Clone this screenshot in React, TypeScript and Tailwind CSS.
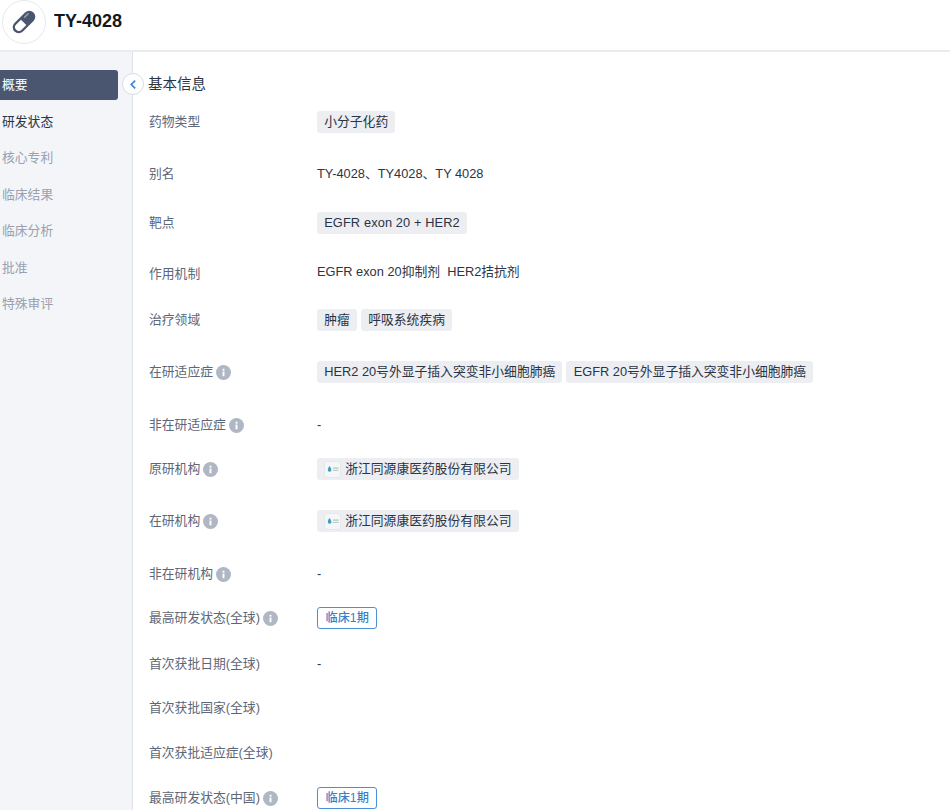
const FONT = "font-['Liberation_Sans','Noto_Sans_CJK_SC',sans-serif]";

const navItems = [
  { label: '研发状态', tone: 'text-[#2b3445]' },
  { label: '核心专利', tone: 'text-[#99a1b0]' },
  { label: '临床结果', tone: 'text-[#99a1b0]' },
  { label: '临床分析', tone: 'text-[#99a1b0]' },
  { label: '批准', tone: 'text-[#99a1b0]' },
  { label: '特殊审评', tone: 'text-[#99a1b0]' },
];

const Tag = ({ children }: { children: React.ReactNode }) => (
  <span className="inline-flex h-[22px] items-center gap-[4px] rounded-[3px] bg-[#eceef2] px-[7.2px] text-[12.8px] text-[#2b3445]">
    {children}
  </span>
);

const Info = () => (
  <svg viewBox="0 0 16 16" className="ml-[3px] h-[15px] w-[15px] shrink-0">
    <circle cx="8" cy="8" r="8" fill="#b0b7c4" />
    <rect x="7" y="7" width="2" height="5" fill="#fff" />
    <rect x="7" y="4" width="2" height="2" fill="#fff" />
  </svg>
);

const OrgLogo = () => (
  <span className="flex h-[17px] w-[17px] items-center justify-center gap-[1px] rounded-[3px] border border-[#e6e8ec] bg-[#f5f6f8]">
    <svg viewBox="0 0 12 8" className="h-[8px] w-[12px]">
      <path d="M2.5 1 C1.2 3 .8 4 .8 5 a1.8 1.8 0 0 0 3.6 0 C4.4 4 3.8 3 2.5 1z" fill="#3a9ac4" />
      <path d="M1.6 5.2a1 1 0 0 0 2 0z" fill="#4fae8a" />
      <rect x="6" y="2.5" width="5.5" height="1.2" fill="#a9c7bb" />
      <rect x="6" y="4.8" width="5.5" height="1.2" fill="#b9cfc6" />
    </svg>
  </span>
);

const Org = () => (
  <Tag>
    <OrgLogo />
    浙江同源康医药股份有限公司
  </Tag>
);

const Stage = () => (
  <span className="inline-flex h-[22px] items-center rounded-[3px] border border-[#4a90d9] bg-white px-[7.5px] text-[12.2px] font-medium text-[#3b7fc9]">
    临床1期
  </span>
);

const Plain = ({ children }: { children: React.ReactNode }) => (
  <span className="text-[12.8px] text-[#2b3445]">{children}</span>
);

const rows: { label: string; info?: boolean; gap: string; value?: React.ReactNode }[] = [
  { label: '药物类型', gap: 'mb-[28px]', value: <Tag>小分子化药</Tag> },
  { label: '别名', gap: 'mb-[25px]', value: <Plain>TY-4028、TY4028、TY 4028</Plain> },
  { label: '靶点', gap: 'mb-[27px]', value: <Tag><span className="tracking-[0.12px]">EGFR exon 20 + HER2</span></Tag> },
  { label: '作用机制', gap: 'mb-[22px]', value: <span className="-translate-y-[2px] text-[12.8px] text-[#2b3445]">EGFR exon 20抑制剂&nbsp;&nbsp;HER2拮抗剂</span> },
  {
    label: '治疗领域',
    gap: 'mb-[28px]',
    value: (
      <div className="flex gap-[4px]">
        <Tag>肿瘤</Tag>
        <Tag>呼吸系统疾病</Tag>
      </div>
    ),
  },
  {
    label: '在研适应症',
    info: true,
    gap: 'mb-[29px]',
    value: (
      <div className="flex gap-[4px]">
        <Tag>HER2 20号外显子插入突变非小细胞肺癌</Tag>
        <Tag>EGFR 20号外显子插入突变非小细胞肺癌</Tag>
      </div>
    ),
  },
  { label: '非在研适应症', info: true, gap: 'mb-[20px]', value: <Plain>-</Plain> },
  { label: '原研机构', info: true, gap: 'mb-[28px]', value: <Org /> },
  { label: '在研机构', info: true, gap: 'mb-[29px]', value: <Org /> },
  { label: '非在研机构', info: true, gap: 'mb-[20px]', value: <Plain>-</Plain> },
  { label: '最高研发状态(全球)', info: true, gap: 'mb-[22px]', value: <Stage /> },
  { label: '首次获批日期(全球)', gap: 'mb-[20px]', value: <Plain>-</Plain> },
  { label: '首次获批国家(全球)', gap: 'mb-[21px]' },
  { label: '首次获批适应症(全球)', gap: 'mb-[21px]' },
  { label: '最高研发状态(中国)', info: true, gap: 'mb-0', value: <Stage /> },
];

export default function App() {
  return (
    <div className={`${FONT} flex h-[810px] w-[950px] flex-col overflow-hidden bg-white`}>
      <header className="flex h-[52px] shrink-0 items-start border-b-2 border-[#e9ebef] pl-[2px]">
        <div className="flex h-[44px] w-[44px] items-center justify-center rounded-full border border-[#e6e8ec] bg-white">
          <svg viewBox="0 0 30 30" className="h-[30px] w-[30px]">
            <g transform="rotate(-45 15 15)">
              <rect x="1.5" y="9" width="27" height="12" rx="6" fill="#4a5670" />
              <path d="M14.5 11.2H7.8a3.8 3.8 0 0 0 0 7.6H14.5z" fill="#fff" />
              <rect x="18" y="11.4" width="6.5" height="1.4" rx=".7" fill="#9aa3b5" />
            </g>
          </svg>
        </div>
        <h1 className="ml-[8px] mt-[9px] text-[18px] leading-[24px] font-bold text-[#14191f]">TY-4028</h1>
      </header>

      <div className="flex min-h-0 flex-1">
        <aside className="relative w-[133px] shrink-0 border-r border-[#dfe2e7] bg-[#f3f5f8] pt-[18px] text-[12.8px]">
          <div className="flex h-[30px] w-[118px] items-center rounded-r-[3px] bg-[#4a5670] pl-[2px] text-white">
            概要
          </div>
          {navItems.map((item) => (
            <div key={item.label} className={`mt-[6.5px] flex h-[30px] items-center pl-[2px] ${item.tone}`}>
              {item.label}
            </div>
          ))}
          <button className="absolute left-[122px] top-[21px] flex h-[22px] w-[22px] items-center justify-center rounded-full border border-[#d9dde3] bg-white">
            <svg viewBox="0 0 10 10" className="h-[11px] w-[11px]" fill="none" stroke="#3b86d8" strokeWidth="1.6">
              <path d="M6.5 1.5 3 5l3.5 3.5" />
            </svg>
          </button>
        </aside>

        <main className="min-w-0 flex-1 pl-[15px]">
          <h2 className="mt-[21px] text-[14.5px] leading-[22px] text-[#2b3445]">基本信息</h2>
          <div className="mt-[15px] flex flex-col">
            {rows.map((row) => (
              <div key={row.label} className={`flex h-[24px] items-center ${row.gap}`}>
                <div className="flex w-[169px] shrink-0 items-center pl-px text-[12.8px] text-[#5d6778]">
                  {row.label}
                  {row.info && <Info />}
                </div>
                {row.value}
              </div>
            ))}
          </div>
        </main>
      </div>
    </div>
  );
}
